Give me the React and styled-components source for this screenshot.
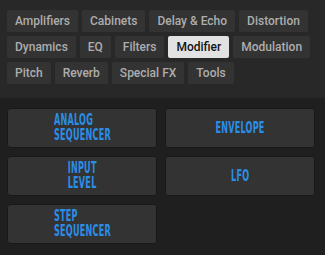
import React from 'react';
import styled, { createGlobalStyle } from 'styled-components';

const GlobalStyle = createGlobalStyle`
    html, body {
        margin: 0;
        padding: 0;
        background: #1f1f1f;
    }
    body {
        font-family: Roboto, "Liberation Sans", sans-serif;
    }
`

const Page = styled.div`
    width: 325px;
    height: 255px;
    display: flex;
    flex-direction: column;
    background: #1f1f1f;
    overflow: hidden;
`

const TagPanel = styled.div`
    height: 98px;
    box-sizing: border-box;
    padding: 10px 7px 0 7px;
    background: #282828;
    display: flex;
    flex-direction: column;
    gap: 4px;
`

const TagRow = styled.div`
    display: flex;
    gap: 4px;
`

const Tag = styled.div`
    height: 22px;
    padding: 0 8px;
    display: flex;
    align-items: center;
    white-space: nowrap;
    border-radius: 2px;
    font-size: 12px;
    font-weight: 500;
    background: ${props => props.active ? '#e2e2e2' : '#333333'};
    color: ${props => props.active ? '#141414' : '#adadad'};
`

const Grid = styled.div`
    display: grid;
    grid-template-columns: 150px 150px;
    gap: 8px;
    padding: 10px 7px 0 7px;
`

const Block = styled.div`
    height: 40px;
    box-sizing: border-box;
    border: 1px solid #191919;
    border-radius: 3px;
    background: #333333;
    display: flex;
    align-items: center;
    justify-content: center;
`

const BlockLabel = styled.div`
    font-family: "Liberation Sans Narrow", "DejaVu Sans Condensed", sans-serif;
    font-weight: bold;
    font-size: 15px;
    line-height: 15px;
    color: #2b8ee6;
    text-align: left;
    transform: scaleX(0.6);
    letter-spacing: 0.4px;
`

const tagRows = [
    ['Amplifiers', 'Cabinets', 'Delay & Echo', 'Distortion'],
    ['Dynamics', 'EQ', 'Filters', 'Modifier', 'Modulation'],
    ['Pitch', 'Reverb', 'Special FX', 'Tools'],
]

const blocks = [
    ['ANALOG', 'SEQUENCER'],
    ['ENVELOPE'],
    ['INPUT', 'LEVEL'],
    ['LFO'],
    ['STEP', 'SEQUENCER'],
]

const App = () => (
    <Page>
        <GlobalStyle />
        <TagPanel>
            {tagRows.map((row, i) => (
                <TagRow key={i}>
                    {row.map(name => (
                        <Tag key={name} active={name === 'Modifier'}>{name}</Tag>
                    ))}
                </TagRow>
            ))}
        </TagPanel>
        <Grid>
            {blocks.map(lines => (
                <Block key={lines.join(' ')}>
                    <BlockLabel>
                        {lines.map(l => <div key={l}>{l}</div>)}
                    </BlockLabel>
                </Block>
            ))}
        </Grid>
    </Page>
)

export default App;
